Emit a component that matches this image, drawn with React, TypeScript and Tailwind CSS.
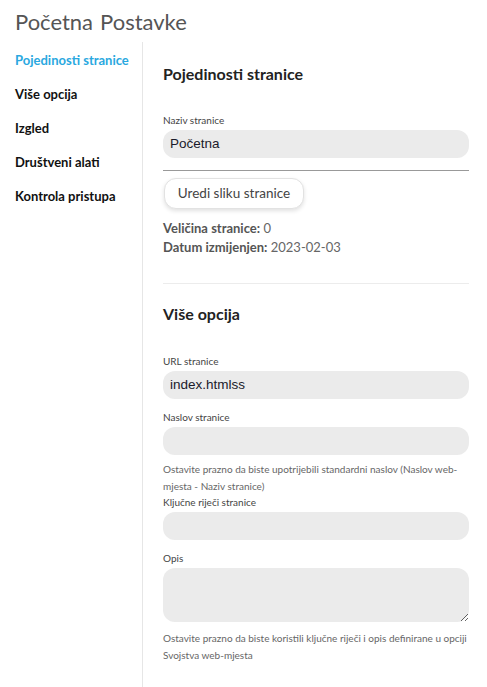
const navItems = [
  "Pojedinosti stranice",
  "Više opcija",
  "Izgled",
  "Društveni alati",
  "Kontrola pristupa",
];

function Field({ label, value }: { label: string; value?: string }) {
  return (
    <div>
      <div className="text-[10px] leading-[14px] text-[#444]">{label}</div>
      <div className="mt-[3px] h-[28px] rounded-[12px] bg-[#ebebeb] px-[7px] flex items-center font-['Liberation_Sans',sans-serif] text-[13.5px] text-[#1a1a2a]">
        {value}
      </div>
    </div>
  );
}

function Help({ children, className = "mt-[6px]" }: { children: React.ReactNode; className?: string }) {
  return (
    <p className={`${className} text-[10px] leading-[17px] text-[#666]`}>{children}</p>
  );
}

export default function App() {
  return (
    <div className="w-[487px] h-[687px] bg-white font-['Lato',sans-serif] overflow-hidden">
      <h1 className="px-[15px] pt-[8px] h-[42px] text-[22px] leading-[28px] text-[#555] flex gap-[7px]">
        <span>Početna</span>
        <span>Postavke</span>
      </h1>
      <div className="flex">
        <nav className="w-[143px] shrink-0 border-r border-[#e6e6e6] h-[645px] pl-[15px] pt-[9px] flex flex-col gap-[15px]">
          {navItems.map((item, i) => (
            <div
              key={item}
              className={
                i === 0
                  ? "text-[13px] leading-[19px] font-bold text-[#2aa8e0]"
                  : "text-[13px] leading-[19px] font-bold text-[#111]"
              }
            >
              {item}
            </div>
          ))}
        </nav>
        <main className="w-[306px] ml-[20px] pt-[22px]">
          <h2 className="text-[16px] leading-[20px] font-bold text-[#222]">Pojedinosti stranice</h2>
          <div className="mt-[29px]">
            <Field label="Naziv stranice" value="Početna" />
          </div>
          <div className="mt-[12px] border-t border-[#999]" />
          <button className="block mt-[7px] ml-[1px] h-[31px] w-[140px] rounded-[12px] bg-white border border-[#e2e2e2] shadow-[0_2px_4px_rgba(0,0,0,0.12)] text-[13.5px] text-[#444]">
            Uredi sliku stranice
          </button>
          <div className="mt-[10px] text-[13px] leading-[19px] text-[#666]">
            <div>
              <span className="font-bold text-[#555]">Veličina stranice:</span> 0
            </div>
            <div>
              <span className="font-bold text-[#555]">Datum izmijenjen:</span> 2023-02-03
            </div>
          </div>
          <div className="mt-[26px] border-t border-[#ececec]" />
          <h2 className="mt-[20px] text-[16px] leading-[20px] font-bold text-[#222]">Više opcija</h2>
          <div className="mt-[30px]">
            <Field label="URL stranice" value="index.htmlss" />
          </div>
          <div className="mt-[11px]">
            <Field label="Naslov stranice" />
          </div>
          <Help>Ostavite prazno da biste upotrijebili standardni naslov (Naslov web-mjesta - Naziv stranice)</Help>
          <div>
            <Field label="Ključne riječi stranice" />
          </div>
          <div className="mt-[11px]">
            <div className="text-[10px] leading-[14px] text-[#444]">Opis</div>
            <textarea
              className="mt-[3px] block w-full h-[54px] rounded-[12px] bg-[#ebebeb] px-[8px] py-[4px] outline-none"
              defaultValue=""
            />
          </div>
          <Help className="mt-[8px]">Ostavite prazno da biste koristili ključne riječi i opis definirane u opciji Svojstva web-mjesta</Help>
        </main>
      </div>
    </div>
  );
}
